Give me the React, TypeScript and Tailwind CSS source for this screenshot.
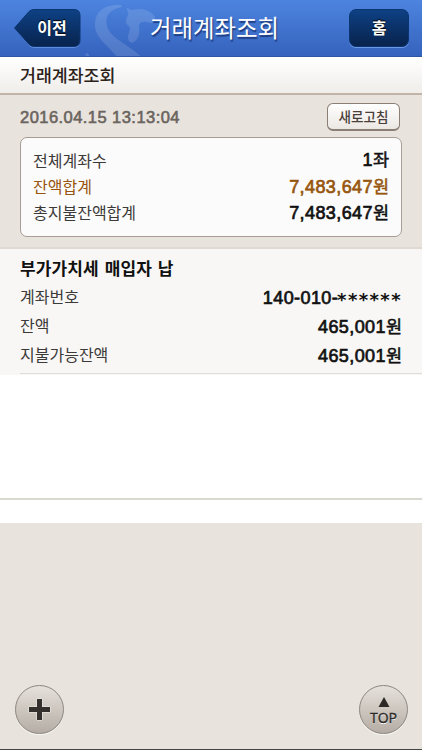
const LABEL = 'text-[16px] text-[#3c3a39]';

const summary = [
  { label: '전체계좌수', value: '1', unit: '좌', color: 'text-[#111]' },
  { label: '잔액합계', value: '7,483,647', unit: '원', color: 'text-[#96560f]' },
  { label: '총지불잔액합계', value: '7,483,647', unit: '원', color: 'text-[#111]' },
];

const account = [
  { label: '계좌번호', value: '140-010-', unit: '******' },
  { label: '잔액', value: '465,001', unit: '원' },
  { label: '지불가능잔액', value: '465,001', unit: '원' },
];

function Amount({ value, unit }: { value: string; unit: string }) {
  return (
    <span className="flex items-baseline leading-[26px]">
      <span className="font-['Liberation_Sans'] text-[18px] tracking-[0.4px] [-webkit-text-stroke:0.7px]">
        {value}
      </span>
      {unit === '******' ? (
        <span className="relative top-[2px] ml-[-1px] font-['DejaVu_Sans'] text-[18px] leading-[20px] font-bold tracking-[1.4px]">{unit}</span>
      ) : (
        <span className="text-[17.5px] [-webkit-text-stroke:0.5px]">{unit}</span>
      )}
    </span>
  );
}

function Header() {
  return (
    <header className="relative flex h-[57px] items-start justify-between border-b border-[#2f55a5] bg-gradient-to-b from-[#4d84df] to-[#3563bd] pt-[9px] pr-[13px] pl-[14px]">
      {/* Seahorse emblem behind the title */}
      <svg className="absolute top-0 left-[84px]" width="80" height="56" viewBox="0 0 80 56" fill="#fff" fillOpacity="0.13">
        <path d="M37 5C22 4 11 10 11 25c0 13 13 20 22 32h24C48 46 26 39 23 26 20 14 28 9 38 7Z" />
        <path d="M43 8c2 0 3 2 5 2 7-2 15-1 19 3 4 2 5 5 3 9-2 3-6-1-10 0-4 0-5 2-5 5 1 6 0 11-5 15-3 2-6-1-6-5 0-3 2-6 2-9-1-3-4-3-4-6 0-4 3-7 2-10-1-1-1-3-1-4Z" />
        <path d="M1 57c0-2 1-4 2-4s2 2 3 4Z" />
      </svg>
      <button className="relative flex h-[38px] w-[67px] items-center justify-center pl-[9px]">
        <svg className="absolute inset-0" width="67" height="39" viewBox="0 0 67 39">
          <defs>
            <linearGradient id="navy" x1="0" y1="0" x2="0" y2="1">
              <stop offset="0" stopColor="#0e4185" />
              <stop offset="1" stopColor="#08234d" />
            </linearGradient>
          </defs>
          <path d="M20 1H60Q66 1 66 7V32Q66 38.7 60 38.7H20Q17 38.7 15 36.5L0.5 19.5L15 3Q17 1 20 1Z" fill="#6d98e3" />
          <path d="M20 0.5H60Q66 0.5 66 6.5V31Q66 37.5 60 37.5H20Q17 37.5 15 35.5L0.5 19L15 2.5Q17 0.5 20 0.5Z" fill="url(#navy)" stroke="#0b3571" />
        </svg>
        <span className="relative -top-px text-[16px] font-bold text-white [text-shadow:0_-1px_1px_#000]">이전</span>
      </button>
      <h1 className="absolute inset-x-0 top-[8px] pl-[7px] text-center text-[23.4px] leading-[38px] text-white [text-shadow:1px_2px_1px_#1d3c80]">
        거래계좌조회
      </h1>
      <button className="relative h-[38px] w-[60px] rounded-[7px] border border-[#0b3571] bg-gradient-to-b from-[#0e4185] to-[#08234d] pb-[2px] text-[16px] font-bold text-white shadow-[0_1px_0_#6d98e3] [text-shadow:0_-1px_1px_#000]">
        홈
      </button>
    </header>
  );
}

export default function App() {
  return (
    <div className="flex h-[750px] w-[422px] flex-col overflow-hidden border-b border-[#444] bg-[#e8e3dd] font-['Noto_Sans_CJK_KR',sans-serif]">
      <Header />

      <div className="flex h-[38px] items-center border-b-2 border-[#c1b5a9] bg-gradient-to-b from-white to-[#f0edea] pl-[20px]">
        <h2 className="text-[17.3px] font-medium text-[#2b2118]">거래계좌조회</h2>
      </div>

      {/* Balance summary */}
      <section className="h-[154px] border-b-2 border-[#e0d9d1] px-[20px] pt-[7px]">
        <div className="flex h-[30px] items-center justify-between">
          <span className="font-['Liberation_Sans'] text-[16.5px] tracking-[0.45px] text-[#6b655f] [-webkit-text-stroke:0.6px]">
            2016.04.15 13:13:04
          </span>
          <button className="mr-[2px] h-[28px] w-[73px] rounded-[6px] border-[1.5px] border-b-2 border-[#8a7e75] bg-gradient-to-b from-white to-[#ebe7e3] pb-[2px] text-[13.6px] leading-[22px] font-medium text-[#4b4039]">
            새로고침
          </button>
        </div>
        <div className="mt-[5px] flex h-[100px] flex-col justify-center rounded-[7px] border border-[#a89c94] bg-[#fcfbfb] px-[12px] pb-[2px]">
          {summary.map((row) => (
            <div key={row.label} className={`flex h-[26.4px] items-center justify-between ${row.color}`}>
              <span className={row.label === '잔액합계' ? 'text-[16px]' : LABEL}>{row.label}</span>
              <Amount value={row.value} unit={row.unit} />
            </div>
          ))}
        </div>
      </section>

      {/* Account */}
      <section className="h-[126px] bg-[#f8f7f5] pt-[5px] pl-[20px]">
        <div className="h-[120px] border-b border-[#dedddb] pr-[20px]">
          <h3 className="flex h-[28px] items-center text-[17px] font-bold tracking-[0.1px] whitespace-pre text-[#111] [word-spacing:2px]">부가가치세 매입자 납</h3>
          {account.map((row) => (
            <div key={row.label} className="flex h-[29px] items-center justify-between text-[#111]">
              <span className={`${LABEL} pb-[2px]`}>{row.label}</span>
              <span className="pt-[2px]">
                <Amount value={row.value} unit={row.unit} />
              </span>
            </div>
          ))}
        </div>
      </section>

      <div className="h-[125px] border-b-2 border-[#d9d9d2] bg-white" />
      <div className="h-[23px] bg-white" />

      {/* Floating actions */}
      <div className="mt-auto flex justify-between pr-[14px] pb-[15px] pl-[15px]">
        <button className="flex size-[49px] items-center justify-center rounded-full border border-[#8b8681] bg-gradient-to-b from-[#e6e1db] to-[#b5ada5] shadow-[0_1px_0_#f8f6f3]">
          <svg width="23" height="23" viewBox="0 0 23 23">
            <path d="M9 1h5v8h8v5h-8v8H9v-8H1V9h8Z" fill="#33302e" stroke="#f1eeea" strokeWidth="1" paintOrder="stroke" />
          </svg>
        </button>
        <button className="flex size-[49px] flex-col items-center rounded-full border border-[#8b8681] bg-gradient-to-b from-[#e6e1db] to-[#b5ada5] pt-[11px] shadow-[0_1px_0_#f8f6f3]">
          <svg width="12" height="10" viewBox="0 0 12 10">
            <path d="M6 0l5.5 10H.5Z" fill="#2c2927" />
          </svg>
          <span className="mt-[3px] font-['Open_Sans'] text-[14px] leading-[16px] text-[#2c2927] [-webkit-text-stroke:0.4px] [text-shadow:0_1px_0_#fff]">TOP</span>
        </button>
      </div>
    </div>
  );
}
